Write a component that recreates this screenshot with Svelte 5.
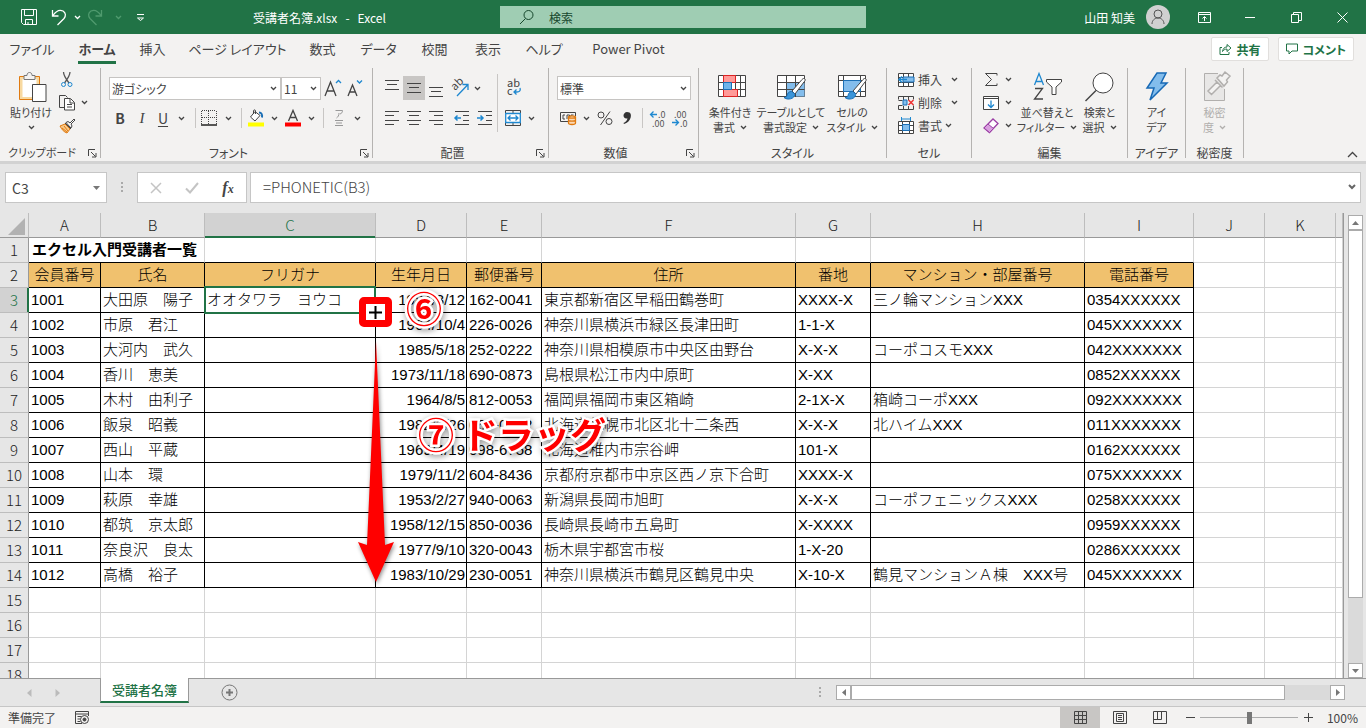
<script lang="ts">
    interface Member {
        id: string
        name: string
        birth: string
        zip: string
        address: string
        block: string
        building: string
        phone: string
    }

    const menuTabs = ['ファイル', 'ホーム', '挿入', 'ページ レイアウト', '数式', 'データ', '校閲', '表示', 'ヘルプ', 'Power Pivot']
    const columns = ['A', 'B', 'C', 'D', 'E', 'F', 'G', 'H', 'I', 'J', 'K', '']
    const headings = ['会員番号', '氏名', 'フリガナ', '生年月日', '郵便番号', '住所', '番地', 'マンション・部屋番号', '電話番号']
    const emptyRows = [15, 16, 17, 18]

    const members: Member[] = [
        { id: '1001', name: '大田原　陽子', birth: '1984/3/12', zip: '162-0041', address: '東京都新宿区早稲田鶴巻町', block: 'XXXX-X', building: '三ノ輪マンションXXX', phone: '0354XXXXXX' },
        { id: '1002', name: '市原　君江', birth: '1964/10/4', zip: '226-0026', address: '神奈川県横浜市緑区長津田町', block: '1-1-X', building: '', phone: '045XXXXXXX' },
        { id: '1003', name: '大河内　武久', birth: '1985/5/18', zip: '252-0222', address: '神奈川県相模原市中央区由野台', block: 'X-X-X', building: 'コーポコスモXXX', phone: '042XXXXXXX' },
        { id: '1004', name: '香川　恵美', birth: '1973/11/18', zip: '690-0873', address: '島根県松江市内中原町', block: 'X-XX', building: '', phone: '0852XXXXXX' },
        { id: '1005', name: '木村　由利子', birth: '1964/8/5', zip: '812-0053', address: '福岡県福岡市東区箱崎', block: '2-1X-X', building: '箱崎コーポXXX', phone: '092XXXXXXX' },
        { id: '1006', name: '飯泉　昭義', birth: '1982/3/26', zip: '060-0812', address: '北海道札幌市北区北十二条西', block: 'X-X-X', building: '北ハイムXXX', phone: '011XXXXXXX' },
        { id: '1007', name: '西山　平蔵', birth: '1969/4/19', zip: '098-6758', address: '北海道稚内市宗谷岬', block: '101-X', building: '', phone: '0162XXXXXX' },
        { id: '1008', name: '山本　環', birth: '1979/11/2', zip: '604-8436', address: '京都府京都市中京区西ノ京下合町', block: 'XXXX-X', building: '', phone: '075XXXXXXX' },
        { id: '1009', name: '萩原　幸雄', birth: '1953/2/27', zip: '940-0063', address: '新潟県長岡市旭町', block: 'X-X-X', building: 'コーポフェニックスXXX', phone: '0258XXXXXX' },
        { id: '1010', name: '都筑　京太郎', birth: '1958/12/15', zip: '850-0036', address: '長崎県長崎市五島町', block: 'X-XXXX', building: '', phone: '0959XXXXXX' },
        { id: '1011', name: '奈良沢　良太', birth: '1977/9/10', zip: '320-0043', address: '栃木県宇都宮市桜', block: '1-X-20', building: '', phone: '0286XXXXXX' },
        { id: '1012', name: '高橋　裕子', birth: '1983/10/29', zip: '230-0051', address: '神奈川県横浜市鶴見区鶴見中央', block: 'X-10-X', building: '鶴見マンションＡ棟　XXX号', phone: '045XXXXXXX' },
    ]

    let activeTab = $state('ホーム')
    let formula = $state('=PHONETIC(B3)')
    let cellName = $state('C3')
    let zoom = $state(100)
</script>

{#snippet chevron()}
    <svg class="chevron" width="7" height="5" viewBox="0 0 7 5"><path d="M1 1l2.5 2.5L6 1" /></svg>
{/snippet}

{#snippet launcher()}
    <svg class="launcher" width="9" height="9" viewBox="0 0 9 9"><path d="M.5 7V.5H7M3 3l4.500 4.500M8 4v4H4" /></svg>
{/snippet}

{#snippet brush()}
    <path d="M30 7c-1-1-2-.5-3 .5L17 19l3 3L29 10c1-1 1.500-2 1-3z" fill="#fff" stroke="#444" />
    <path d="M16.500 19.500c-3 0-4 2-4.500 4-.5 1.500-1.500 2-3 2 2 2 6 2 8.500.5 2-1.500 2.500-3 2-4.500z" fill="#3b95d9" stroke="#1b6fb5" />
{/snippet}

<div class="book">
    <header class="titlebar">
        <div class="quick">
            <button aria-label="上書き保存">
                <svg width="18" height="18" viewBox="0 0 18 18"><path d="M1.500 1.500h15v15h-13l-2-2zM4.500 1.500v6h9v-6M5.500 16.500v-5h7v5M8 14v2" /></svg>
            </button>
            <button aria-label="元に戻す">
                <svg width="16" height="18" viewBox="0 0 16 18"><path d="M1.500 2v6h6M2 7.500C5 3 9 1.500 12 3c3 2 3 5 1 7.500L6.500 17" stroke-width="1.300" /></svg>
            </button>
            <button aria-label="元に戻す一覧">{@render chevron()}</button>
            <button class="dim" aria-label="やり直し">
                <svg width="16" height="18" viewBox="0 0 16 18"><path d="M14.500 2v6h-6M14 7.500C11 3 7 1.500 4 3 1 5 1 8 3 10.500L9.500 17" stroke-width="1.300" /></svg>
            </button>
            <button class="dim" aria-label="やり直し一覧">{@render chevron()}</button>
            <button aria-label="クイック アクセスの設定">
                <svg width="9" height="9" viewBox="0 0 9 9"><path d="M1 1.500h7M1.500 5l3 2.500 3-2.500z" /></svg>
            </button>
        </div>
        <h1>受講者名簿.xlsx&nbsp;&nbsp; -&nbsp;&nbsp; Excel</h1>
        <label class="search">
            <svg width="16" height="16" viewBox="0 0 16 16"><circle cx="9.500" cy="6" r="4.500" /><path d="M6.500 9.500L1 15" /></svg>
            <input type="text" placeholder="検索" aria-label="検索" />
        </label>
        <div class="account">
            <span>山田 知美</span>
            <svg class="avatar" width="24" height="24" viewBox="0 0 24 24"><circle class="disc" cx="12" cy="12" r="12" /><circle cx="12" cy="9" r="4" /><path d="M6 19c0-3.500 2.500-6 6-6s6 2.500 6 6" /></svg>
        </div>
        <div class="window-buttons">
            <button aria-label="リボンの表示オプション">
                <svg width="13" height="11" viewBox="0 0 13 11"><path d="M.5.5h12v10H.5zM.5 2.500h12M6.500 9V5M4.500 6.500l2-2 2 2" /></svg>
            </button>
            <button aria-label="最小化"><svg width="10" height="11" viewBox="0 0 10 11"><path d="M0 5.500h10" /></svg></button>
            <button aria-label="元に戻す (縮小)">
                <svg width="11" height="11" viewBox="0 0 11 11"><path d="M.5 2.500h7v8h-7zM2.500 2.500v-2h8v8h-3" /></svg>
            </button>
            <button aria-label="閉じる"><svg width="11" height="11" viewBox="0 0 11 11"><path d="M.5.5l10 10M10.500.5l-10 10" /></svg></button>
        </div>
    </header>

    <nav class="menu">
        <div class="menu-tabs">
            {#each menuTabs as tab}
                <button class:active={tab === activeTab} onclick={() => (activeTab = tab)}><span>{tab}</span></button>
            {/each}
        </div>
        <button class="pill">
            <svg width="13" height="12" viewBox="0 0 13 12"><path d="M3 4.500H1v7h9V9M3.500 8.500C4 5.500 5.500 4 8 4V1.500L12 5 8 8.500V6C6 6 4.500 7 3.500 8.500z" /></svg>
            共有
        </button>
        <button class="pill">
            <svg width="12" height="12" viewBox="0 0 12 12"><path d="M.5 1h11v7H6L3 11V8H.5z" /></svg>
            コメント
        </button>
    </nav>

    <section class="ribbon">
        <div class="group clipboard">
            <div class="group-body">
                <button class="big">
                    <svg width="28" height="32" viewBox="0 0 28 32">
                        <path d="M4 5.500h17v21H4z" fill="#fff" stroke="#f8d9a0" stroke-width="3" />
                        <path d="M2.500 4.500h20v23h-20z" stroke="#e07a10" />
                        <path d="M7 7.500V3.500h3c0-2 1-3 2.500-3s2.500 1 2.500 3h3v4z" fill="#f3f2f1" stroke="#777" />
                        <path d="M15.500 12.500H29v17H15.500z" fill="#fff" stroke="#444" />
                    </svg>
                    <span>貼り付け</span>
                    <span>{@render chevron()}</span>
                </button>
                <div class="small-stack">
                    <button aria-label="切り取り">
                        <svg width="16" height="17" viewBox="0 0 16 17"><path d="M4.500 1c0 3 1 5 5.500 11M11 1c0 3-1 5-5.500 11" stroke="#555" stroke-width="1.300" /><circle cx="4.500" cy="13.500" r="2" stroke="#1e88d0" /><circle cx="11" cy="13.500" r="2" stroke="#1e88d0" /></svg>
                    </button>
                    <span></span>
                    <button aria-label="コピー">
                        <svg width="16" height="17" viewBox="0 0 16 17"><path d="M5 13.500H.5v-12h6l2 2" fill="none" /><path d="M5.500 4.500h6l4 4v7.500h-10z" fill="#fff" /><path d="M11 5v4h4M8 10.500h5M8 13h5" /></svg>
                    </button>
                    <button aria-label="コピーの一覧">{@render chevron()}</button>
                    <button aria-label="書式のコピー/貼り付け">
                        <svg width="17" height="16" viewBox="0 0 17 16"><path d="M1 8l5-2 5 5-3 4c-3-1-5-3-7-7z" fill="#f8c98a" stroke="#e07a10" /><path d="M3 10l5 4M5 8l4 5" stroke="#e07a10" /><path d="M6 5l6 6M7 4.500l2-1 2 1.500L15 1l1 1-4 4 1 2-1 2z" fill="#fff" /></svg>
                    </button>
                </div>
            </div>
            <div class="group-label">クリップボード{@render launcher()}</div>
        </div>

        <div class="group font">
            <div class="group-body rows">
                <div class="font-top">
                    <label class="combo"><select aria-label="フォント"><option>游ゴシック</option></select>{@render chevron()}</label>
                    <label class="combo"><select aria-label="フォント サイズ"><option>11</option></select>{@render chevron()}</label>
                    <button aria-label="フォント サイズの拡大">
                        <svg width="17" height="18" viewBox="0 0 17 18"><path d="M1 17L6.500 3 12 17M3 12h7" stroke-width="1.300" /><path d="M12 4l2.500-2.500L17 4" stroke="#1e88d0" stroke-width="1.300" /></svg>
                    </button>
                    <button aria-label="フォント サイズの縮小">
                        <svg width="17" height="18" viewBox="0 0 17 18"><path d="M2 17L6.500 6 11 17M3.500 13h6" stroke-width="1.300" /><path d="M11 1.500L13.500 4 16 1.500" stroke="#1e88d0" stroke-width="1.300" /></svg>
                    </button>
                </div>
                <div class="font-bottom">
                    <button class="letter bold">B</button>
                    <button class="letter italic">I</button>
                    <button class="letter underline">U</button>
                    <button aria-label="下線の種類">{@render chevron()}</button>
                    <i class="rule"></i>
                    <button aria-label="罫線">
                        <svg width="16" height="16" viewBox="0 0 16 16"><path d="M1 .5h14M.5 1v13M15.500 1v13M7.500 1v13M1 7.500h14" stroke-dasharray="1 1" /><path d="M0 15h16" stroke="#000" stroke-width="1.300" /></svg>
                    </button>
                    <button aria-label="罫線の種類">{@render chevron()}</button>
                    <i class="rule"></i>
                    <button aria-label="塗りつぶしの色">
                        <svg width="16" height="18" viewBox="0 0 16 18"><path d="M7 2.500L2.500 8 7 12l5-5.500zM5.500 5V2c0-1.500 2-1.500 2 0v3" fill="#fff" /><path d="M11 3.500c2.500 0 3.500 2 3 5" stroke="#1b6fb5" stroke-width="2" /><path d="M0 15.500h16" stroke="#ff0" stroke-width="4" /></svg>
                    </button>
                    <button aria-label="塗りつぶしの色一覧">{@render chevron()}</button>
                    <button aria-label="フォントの色">
                        <svg width="16" height="18" viewBox="0 0 16 18"><path d="M3.500 12L8 1.500 12.500 12M5 8.500h6" stroke-width="1.300" /><path d="M0 15.500h16" stroke="red" stroke-width="4" /></svg>
                    </button>
                    <button aria-label="フォントの色一覧">{@render chevron()}</button>
                    <i class="rule"></i>
                    <button class="dim" aria-label="ふりがなの表示">
                        <svg width="12" height="18" viewBox="0 0 12 18"><path d="M2.500 1.500h7c0 2-1 3-2.500 3.500M6 4c0 2.500-1 4-2.500 5M2 11.500h8M3 14h6M2 16.500h8" /></svg>
                    </button>
                    <button aria-label="ふりがなの設定">{@render chevron()}</button>
                </div>
            </div>
            <div class="group-label">フォント{@render launcher()}</div>
        </div>

        <div class="group align">
            <div class="group-body">
                <div class="rows">
                    <div class="align-top">
                        <button aria-label="上揃え"><svg width="14" height="20" viewBox="0 0 14 20"><path d="M0 2.500h14M2 6.500h10M0 11.500h14" /></svg></button>
                        <button class="pressed" aria-label="上下中央揃え"><svg width="14" height="14" viewBox="0 0 14 14"><path d="M0 2.500h14M2 6.500h10M0 11.500h14" /></svg></button>
                        <button aria-label="下揃え"><svg width="14" height="20" viewBox="0 0 14 20"><path d="M0 9.500h14M2 13.500h10M0 18.500h14" /></svg></button>
                        <button aria-label="方向">
                            <svg width="18" height="18" viewBox="0 0 18 18"><text transform="translate(5 12) rotate(-45)" class="glyph">ab</text><path d="M7 17L17.500 6M12.500 5.500H18V11" stroke="#1e88d0" stroke-width="1.300" /></svg>
                        </button>
                        <button aria-label="方向の一覧">{@render chevron()}</button>
                    </div>
                    <div class="align-bottom">
                        <button aria-label="左揃え"><svg width="14" height="14" viewBox="0 0 14 14"><path d="M0 .5h14M0 4.500h9M0 9.500h14M0 13.500h9" /></svg></button>
                        <button aria-label="中央揃え"><svg width="14" height="14" viewBox="0 0 14 14"><path d="M0 .5h14M2 4.500h10M0 9.500h14M2 13.500h10" /></svg></button>
                        <button aria-label="右揃え"><svg width="14" height="14" viewBox="0 0 14 14"><path d="M0 .5h14M5 4.500h9M0 9.500h14M5 13.500h9" /></svg></button>
                        <button aria-label="インデントを減らす"><svg width="15" height="14" viewBox="0 0 15 14"><path d="M1 .5h14M9 4.500h6M9 9.500h6M1 13.500h14" /><path d="M7 7H1M3.500 4.500L1 7l2.500 2.500" stroke="#1e88d0" stroke-width="1.500" /></svg></button>
                        <button aria-label="インデントを増やす"><svg width="15" height="14" viewBox="0 0 15 14"><path d="M1 .5h14M9 4.500h6M9 9.500h6M1 13.500h14" /><path d="M0 7h6M3.500 4.500L6 7 3.500 9.500" stroke="#1e88d0" stroke-width="1.500" /></svg></button>
                    </div>
                </div>
                <i class="rule tall"></i>
                <div class="rows">
                    <div class="merge">
                        <button aria-label="折り返して全体を表示する">
                            <svg width="16" height="18" viewBox="0 0 16 18"><text x="2" y="8" class="glyph">ab</text><text x="2" y="16" class="glyph">c</text><path d="M15 9c1 3-1 4-3 4H9M11.500 10.500L9 13l2.500 2.500" stroke="#1e88d0" stroke-width="1.300" /></svg>
                        </button>
                    </div>
                    <div class="merge">
                        <button aria-label="セルを結合して中央揃え">
                            <svg width="16" height="16" viewBox="0 0 16 16"><path d="M.5 3V.5h15V3M.5 12.500v3h15v-3M8 0v3M8 12.500V16" /><path d="M.7 3.500h14.600v9H.7z" fill="#fff" stroke="#1e88d0" stroke-width="1.300" /><path d="M3 8h10M5.500 5.500L3 8l2.500 2.500M10.500 5.500L13 8l-2.500 2.500" stroke="#1e88d0" stroke-width="1.300" /></svg>
                        </button>
                        <button aria-label="結合の種類">{@render chevron()}</button>
                    </div>
                </div>
            </div>
            <div class="group-label">配置{@render launcher()}</div>
        </div>

        <div class="group number">
            <div class="group-body rows">
                <label class="combo"><select aria-label="表示形式"><option>標準</option></select>{@render chevron()}</label>
                <div class="number-bottom">
                    <button aria-label="通貨表示形式">
                        <svg width="17" height="14" viewBox="0 0 17 14"><path d="M8 10.500H.5v-9h15V5M5 4H3v4h2M7 8V4h2.500v2M11 6V4h2.500" /><path d="M8.500 6v6c0 2 7 2 7 0V6c0-1.500-7-1.500-7 0c0 1.500 7 1.500 7 0M8.500 9c0 1.500 7 1.500 7 0" fill="#fbd9b5" stroke="#e07a10" stroke-width="1.300" /></svg>
                    </button>
                    <button aria-label="通貨の一覧">{@render chevron()}</button>
                    <button aria-label="パーセント スタイル">
                        <svg width="16" height="16" viewBox="0 0 16 16"><circle cx="4" cy="5" r="3" /><circle cx="12" cy="11.500" r="3" /><path d="M13 1.500L3.500 15" /></svg>
                    </button>
                    <button aria-label="桁区切りスタイル">
                        <svg width="10" height="14" viewBox="0 0 10 14"><path d="M5 1c4 0 4.500 3 3.500 6-1 3-3 5-6.500 6l-.5-1c2-1 3.500-2.500 4-4.500-3 .5-4-1.500-4-3S3 1 5 1z" fill="#333" stroke="none" /></svg>
                    </button>
                    <i class="rule"></i>
                    <button aria-label="小数点以下の表示桁数を増やす">
                        <svg width="17" height="17" viewBox="0 0 17 17"><text x="9" y="8" class="digits">.0</text><text x="3" y="17" class="digits">.00</text><path d="M8 4.500H1.500M4.500 1.500l-3 3 3 3" stroke="#1e88d0" stroke-width="1.300" /></svg>
                    </button>
                    <button aria-label="小数点以下の表示桁数を減らす">
                        <svg width="17" height="17" viewBox="0 0 17 17"><text x="3" y="8" class="digits">.00</text><text x="9" y="17" class="digits">.0</text><path d="M1 12.500h6.500M4.500 9.500l3 3-3 3" stroke="#1e88d0" stroke-width="1.300" /></svg>
                    </button>
                </div>
            </div>
            <div class="group-label">数値{@render launcher()}</div>
        </div>

        <div class="group styles">
            <div class="group-body">
                <button class="big">
                    <svg width="32" height="32" viewBox="0 0 32 32"><path d="M4.500 3.500h27v21h-27z" fill="#fff" /><path d="M4.500 10.500h27M4.500 17.500h27M9.500 3v22M21.500 3v22M26.500 3v22" /><path d="M9.500 3.500h12v7h-12zM9.500 17.500h14v7h-14z" fill="#ff9a98" stroke="#d22" /><path d="M9.500 10.500h8v7h-8z" fill="#6fb4ea" stroke="#1b6fb5" /></svg>
                    <span>条件付き</span>
                    <span>書式 {@render chevron()}</span>
                </button>
                <button class="big">
                    <svg width="32" height="32" viewBox="0 0 32 32"><path d="M2.500 3.500h27v21h-27z" fill="#fff" /><path d="M11.500 10.500h18v14h-18z" fill="#83bdec" stroke="none" /><path d="M2.500 10.500h27M2.500 17.500h27M11.500 3v22M20.500 3v22" />{@render brush()}</svg>
                    <span>テーブルとして</span>
                    <span>書式設定 {@render chevron()}</span>
                </button>
                <button class="big">
                    <svg width="32" height="32" viewBox="0 0 32 32"><path d="M2.500 3.500h27v21h-27z" fill="#fff" /><path d="M2.500 8.500h27M2.500 19.500h27M7.500 3v22M24.500 3v22" /><path d="M7.500 8.500h17v11h-17z" fill="#83bdec" stroke="#1b6fb5" />{@render brush()}</svg>
                    <span>セルの</span>
                    <span>スタイル {@render chevron()}</span>
                </button>
            </div>
            <div class="group-label">スタイル</div>
        </div>

        <div class="group cells">
            <div class="group-body lines">
                <button>
                    <svg width="17" height="14" viewBox="0 0 17 14"><path d="M.5.5h15v13H.5zM.5 4.500h15M.5 9.500h15M5.500 0v14M10.500 0v14" fill="#fff" /><path d="M5 4h11v5H5z" fill="#83bdec" stroke="#1b6fb5" /><path d="M9 6.500H1M4 3.500l-3 3 3 3" stroke="#1e88d0" stroke-width="1.500" /></svg>
                    <span>挿入</span>{@render chevron()}
                </button>
                <button>
                    <svg width="17" height="14" viewBox="0 0 17 14"><path d="M.5 3.500v-3h15v3M.5 9.500v4h15v-4M.5 4.500h4M.5 9.500h4M5.500 0v4M10.500 0v4M5.500 10v4M10.500 10v4" /><path d="M5 4h4v5H5z" fill="#83bdec" stroke="#1b6fb5" /><path d="M10.500 4l5 5M15.500 4l-5 5" stroke="#e33" stroke-width="1.500" /></svg>
                    <span>削除</span>{@render chevron()}
                </button>
                <button>
                    <svg width="17" height="17" viewBox="0 0 17 17"><path d="M.5 4.500h15v12H.5zM.5 8.500h15M.5 13.500h15M4.500 4v13M11.500 4v13" fill="#fff" /><path d="M4.500 7.500h7v6h-7z" fill="#83bdec" stroke="#1b6fb5" /><path d="M3.500 0v4M12.500 0v4M4 2h8" stroke="#1e88d0" /></svg>
                    <span class="short">書式</span>{@render chevron()}
                </button>
            </div>
            <div class="group-label">セル</div>
        </div>

        <div class="group edit">
            <div class="group-body">
                <div class="small-stack">
                    <button aria-label="合計"><svg width="14" height="15" viewBox="0 0 14 15"><path d="M13 3.500v-2H1.500l6 6-6 6H13v-2" /></svg></button>
                    <button aria-label="合計の一覧">{@render chevron()}</button>
                    <button aria-label="フィル"><svg width="16" height="14" viewBox="0 0 16 14"><path d="M.5.5h15v13H.5zM.5 2.500h15" fill="#fff" /><path d="M8 4.500v7M5 8.500l3 3 3-3" stroke="#1e88d0" stroke-width="1.300" /></svg></button>
                    <button aria-label="フィルの一覧">{@render chevron()}</button>
                    <button aria-label="クリア"><svg width="16" height="16" viewBox="0 0 16 16"><path d="M1 10L10 1l5 4.500-8.500 9z" fill="#fff" stroke="#9b3fa5" stroke-width="1.300" /><path d="M1 10l4-4 5.500 4.500-4 4z" fill="#d9a0df" stroke="#9b3fa5" /></svg></button>
                    <button aria-label="クリアの一覧">{@render chevron()}</button>
                </div>
                <button class="big">
                    <svg width="30" height="32" viewBox="0 0 30 32"><path d="M2.500 13L7 1.500 11.500 13M4 9.500h6" stroke="#1e88d0" stroke-width="1.300" /><path d="M3 16.500h7.500L2.500 27H11" stroke-width="1.300" /><path d="M14.500 7.500h15V10l-5.500 5v7.500h-4V15l-5.500-5z" fill="#fff" /></svg>
                    <span>並べ替えと</span>
                    <span>フィルター {@render chevron()}</span>
                </button>
                <button class="big">
                    <svg width="32" height="32" viewBox="0 0 32 32"><circle cx="19" cy="11" r="10" fill="#fff" /><path d="M12 18.500L1.500 29" stroke-width="1.500" /></svg>
                    <span>検索と</span>
                    <span>選択 {@render chevron()}</span>
                </button>
            </div>
            <div class="group-label">編集</div>
        </div>

        <div class="group single">
            <div class="group-body">
                <button class="big">
                    <svg width="24" height="32" viewBox="0 0 24 32"><path d="M12 1h9l-5 10h6L5 28l4-12H2z" fill="#83bdec" stroke="#1769b5" stroke-width="1.500" /></svg>
                    <span>アイ</span>
                    <span>デア</span>
                </button>
            </div>
            <div class="group-label">アイデア</div>
        </div>

        <div class="group single">
            <div class="group-body">
                <button class="big" disabled>
                    <svg width="28" height="32" viewBox="0 0 28 32"><path d="M17 1.500H3.500v27h20V17" fill="#e8e7e6" /><path d="M7 19l9-9 3.500 3.500-9 9zM14 8l7.500 7.500M16 6l3-3 2 1 3-4 5 4-3.500 4 1 2-3.500 4z" fill="#f3f2f1" stroke-width="1.500" /></svg>
                    <span>秘密</span>
                    <span>度 {@render chevron()}</span>
                </button>
            </div>
            <div class="group-label">秘密度</div>
        </div>
        <button class="collapse" aria-label="リボンを折りたたむ">
            <svg width="11" height="7" viewBox="0 0 11 7"><path d="M1 6l4.500-4.500L10 6" stroke-width="1.300" /></svg>
        </button>
    </section>

    <section class="formula-bar">
        <label class="name-box">
            <input type="text" bind:value={cellName} aria-label="名前ボックス" />
            <svg width="7" height="4" viewBox="0 0 7 4"><path d="M0 0h7L3.500 4z" /></svg>
        </label>
        <i class="dots"></i>
        <div class="fx">
            <button aria-label="キャンセル"><svg width="12" height="12" viewBox="0 0 12 12"><path d="M1 1l10 10M11 1L1 11" /></svg></button>
            <button aria-label="入力"><svg width="14" height="12" viewBox="0 0 14 12"><path d="M1 6.500L5 10.500 13 1" stroke-width="2" /></svg></button>
            <button class="fx-label" aria-label="関数の挿入">f<small>x</small></button>
        </div>
        <label class="formula">
            <input type="text" bind:value={formula} aria-label="数式バー" />
            <svg width="8" height="6" viewBox="0 0 8 6"><path d="M1 1l3 3 3-3" stroke="#666" stroke-width="2" /></svg>
        </label>
    </section>

    <main class="sheet">
        <div class="grid">
            <table>
                <colgroup>
                    <col class="w-head" /><col class="w-a" /><col class="w-b" /><col class="w-c" /><col class="w-d" /><col class="w-e" />
                    <col class="w-f" /><col class="w-e" /><col class="w-h" /><col class="w-i" /><col class="w-j" /><col class="w-j" /><col />
                </colgroup>
                <thead>
                    <tr>
                        <th class="corner"><svg width="17" height="17" viewBox="0 0 17 17"><path d="M17 0v17H0z" /></svg></th>
                        {#each columns as column}
                            <th class:current={column === 'C'}>{column}</th>
                        {/each}
                    </tr>
                </thead>
                <tbody>
                    <tr class="title-row">
                        <th>1</th>
                        <td colspan="2" class="ruled">エクセル入門受講者一覧</td>
                        {#each columns.slice(2) as _, i}
                            <td class:ruled={i < 7}></td>
                        {/each}
                    </tr>
                    <tr class="heading-row">
                        <th>2</th>
                        {#each headings as heading}
                            <td class="boxed">{heading}</td>
                        {/each}
                        <td></td><td></td><td></td>
                    </tr>
                    {#each members as member, i}
                        <tr>
                            <th class:current={i === 0}>{i + 3}</th>
                            <td class="boxed">{member.id}</td>
                            <td class="boxed">{member.name}</td>
                            <td class="boxed" class:selected={i === 0}>{i === 0 ? 'オオタワラ　ヨウコ' : ''}</td>
                            <td class="boxed date">{member.birth}</td>
                            <td class="boxed">{member.zip}</td>
                            <td class="boxed">{member.address}</td>
                            <td class="boxed">{member.block}</td>
                            <td class="boxed">{member.building}</td>
                            <td class="boxed">{member.phone}</td>
                            <td></td><td></td><td></td>
                        </tr>
                    {/each}
                    {#each emptyRows as row}
                        <tr>
                            <th>{row}</th>
                            {#each columns as _}
                                <td></td>
                            {/each}
                        </tr>
                    {/each}
                </tbody>
            </table>

            <!-- drag guide from the fill handle down to the last member -->
            <svg class="arrow" width="44" height="250" viewBox="0 0 44 250"><path d="M22 4l9 204 9-3-18 40L4 205l9 3z" /></svg>
            <div class="handle">
                <svg width="13" height="13" viewBox="0 0 13 13"><path d="M6.500 0v13M0 6.500h13" /></svg>
            </div>
            <div class="note step-six">⑥</div>
            <div class="note step-seven"><span>⑦</span>ドラッグ</div>
        </div>
        <div class="scroll-y">
            <button aria-label="上へスクロール"><svg width="7" height="4" viewBox="0 0 7 4"><path d="M0 4h7L3.500 0z" /></svg></button>
            <i class="thumb"></i>
            <i class="track"></i>
            <button aria-label="下へスクロール"><svg width="7" height="4" viewBox="0 0 7 4"><path d="M0 0h7L3.500 4z" /></svg></button>
        </div>
    </main>

    <div class="sheet-tabs">
        <div class="sheet-nav">
            <button aria-label="前のシート"><svg width="5" height="8" viewBox="0 0 5 8"><path d="M4.500 0v8L0 4z" /></svg></button>
            <button aria-label="次のシート"><svg width="5" height="8" viewBox="0 0 5 8"><path d="M.5 0v8L5 4z" /></svg></button>
        </div>
        <button class="sheet-tab">受講者名簿</button>
        <button class="add" aria-label="新しいシート">
            <svg width="17" height="17" viewBox="0 0 17 17"><circle cx="8.500" cy="8.500" r="7.500" /><path d="M8.500 5v7M5 8.500h7" stroke-width="2" /></svg>
        </button>
        <i class="dots"></i>
        <div class="scroll-x">
            <button aria-label="左へスクロール"><svg width="4" height="7" viewBox="0 0 4 7"><path d="M4 0v7L0 3.500z" /></svg></button>
            <i class="thumb"></i>
            <i class="track"></i>
            <button aria-label="右へスクロール"><svg width="4" height="7" viewBox="0 0 4 7"><path d="M0 0v7l4-3.500z" /></svg></button>
        </div>
    </div>

    <footer class="status">
        <span>準備完了</span>
        <button class="macro" aria-label="マクロの記録">
            <svg width="15" height="14" viewBox="0 0 15 14"><path d="M7 12.500H.5V.5h13V5M.5 3h13M2.500 5.500h4M2.500 8h3M2.500 10.500h3" /><circle cx="9.500" cy="8.500" r="4" fill="#f3f2f1" /><circle cx="9.500" cy="8.500" r="1.500" fill="#444" /></svg>
        </button>
        <div class="views">
            <button class="pressed" aria-label="標準"><svg width="13" height="13" viewBox="0 0 13 13"><path d="M.5.5h12v12H.5zM4.500 0v13M8.500 0v13M0 4.500h13M0 8.500h13" /></svg></button>
            <button aria-label="ページ レイアウト"><svg width="14" height="13" viewBox="0 0 14 13"><path d="M.5.5h13v12H.5zM3.500 2.500h7v8h-7zM5 4.500h4M5 6.500h4M5 8.500h4" /></svg></button>
            <button aria-label="改ページ プレビュー"><svg width="14" height="13" viewBox="0 0 14 13"><path d="M.5.5h13v12H.5zM4.500.5v8M8.500.5v8M.5 8.500h8" /></svg></button>
        </div>
        <button class="step" aria-label="縮小"><svg width="9" height="9" viewBox="0 0 9 9"><path d="M0 4.500h9" /></svg></button>
        <input type="range" min="0" max="200" bind:value={zoom} aria-label="ズーム" />
        <button class="step" aria-label="拡大"><svg width="9" height="9" viewBox="0 0 9 9"><path d="M0 4.500h9M4.500 0v9" /></svg></button>
        <output>{zoom}%</output>
    </footer>
</div>

<style>
    :global(body) {
        margin: 0;
        overflow: hidden;
    }

    .book {
        display: flex;
        flex-direction: column;
        height: 100vh;
        overflow: hidden;
        background: #e6e6e6;
        color: #444;
        font-family: 'Noto Sans CJK JP', sans-serif;
        font-size: 12px;
        font-feature-settings: 'palt';
    }

    .book * {
        box-sizing: border-box;
    }

    button {
        display: flex;
        align-items: center;
        justify-content: center;
        padding: 0;
        border: 0;
        background: none;
        color: inherit;
        font: inherit;
        font-feature-settings: inherit;
        white-space: nowrap;
    }

    input,
    select {
        min-width: 0;
        padding: 0;
        border: 0;
        outline: 0;
        background: none;
        color: inherit;
        font: inherit;
        font-feature-settings: inherit;
        appearance: none;
    }

    svg {
        flex: none;
        fill: none;
        stroke: #444;
        overflow: visible;
    }

    .chevron {
        stroke-width: 1.3;
    }

    .glyph {
        fill: #444;
        stroke: none;
        font-size: 11px;
    }

    .digits {
        fill: #555;
        stroke: none;
        font-size: 9px;
    }

    /* title bar */
    .titlebar {
        display: flex;
        flex: none;
        align-items: center;
        height: 34px;
        padding-right: 1px;
        background: #217346;
        color: #fff;
    }

    .titlebar svg {
        stroke: #fff;
    }

    .quick {
        display: grid;
        grid-template-columns: 26px 32px 2px 32px 12px 30px;
        gap: 1px;
        width: 237px;
        padding-left: 16px;
    }

    .quick .dim svg {
        stroke: #4f9a6e;
    }

    h1 {
        width: 263px;
        margin: 0;
        padding-left: 16px;
        font-size: 12px;
        font-weight: 400;
    }

    .search {
        display: flex;
        align-items: center;
        gap: 14px;
        width: 366px;
        height: 22px;
        padding-left: 19px;
        background: #9fcdb3;
    }

    .search svg {
        stroke: #17482d;
    }

    .search input {
        flex: 1;
    }

    .search input::placeholder {
        color: #17482d;
        opacity: 1;
    }

    .account {
        display: flex;
        align-items: center;
        gap: 11px;
        margin-left: auto;
    }

    .titlebar .avatar {
        stroke: #555;
    }

    .titlebar .disc {
        fill: #d0d0d0;
        stroke: none;
    }

    .window-buttons {
        display: grid;
        grid-template-columns: repeat(4, 46px);
        margin-left: 11px;
    }

    /* menu */
    .menu {
        display: flex;
        flex: none;
        align-items: center;
        gap: 9px;
        height: 30px;
        padding-right: 12px;
        background: #f3f2f1;
        font-size: 13px;
    }

    .menu-tabs {
        display: grid;
        flex: 1;
        grid-template-columns: 64px 66px 45px 125px 45px 67px 45px 62px 50px 119px;
    }

    .menu-tabs button {
        height: 30px;
    }

    .menu-tabs span {
        margin-top: 5px;
        padding-bottom: 3px;
        border-bottom: 3px solid transparent;
        line-height: 18px;
    }

    .menu-tabs .active span {
        border-color: #217346;
        font-weight: 700;
    }

    .pill {
        gap: 5px;
        height: 24px;
        padding: 0 7px;
        border: 1px solid #e1dfdd;
        border-radius: 2px;
        background: #fff;
        color: #217346;
        font-size: 12px;
        font-weight: 700;
    }

    .pill svg {
        stroke: #217346;
    }

    /* ribbon */
    .ribbon {
        display: flex;
        flex: none;
        height: 100px;
        padding-top: 4px;
        border-bottom: 3px solid #d2d2d2;
        background: #f3f2f1;
        line-height: 15px;
    }

    .group {
        display: flex;
        flex: none;
        flex-direction: column;
        height: 90px;
        border-right: 1px solid #b5b3b1;
    }

    .group-body {
        display: flex;
        height: 77px;
    }

    .group-label {
        position: relative;
        height: 13px;
        line-height: 15px;
        text-align: center;
    }

    .launcher {
        position: absolute;
        right: 3px;
        bottom: 0;
    }

    .rows {
        display: flex;
        flex-direction: column;
        gap: 6px;
        padding-top: 8px;
    }

    .rows > div {
        display: grid;
        height: 24px;
        place-items: center;
    }

    .big {
        flex-direction: column;
        justify-content: flex-start;
        padding-top: 4px;
        font-size: 11px;
    }

    .big > svg {
        margin-bottom: 1px;
    }

    .big span {
        display: flex;
        align-items: center;
        gap: 5px;
        height: 15px;
    }

    .big:disabled {
        color: #b1afad;
    }

    .big:disabled svg {
        stroke: #b1afad;
    }

    .small-stack {
        display: grid;
        grid-template-rows: repeat(3, 23px);
        place-items: center;
        align-content: start;
    }

    .rule {
        width: 1px;
        height: 20px;
        background: #c8c6c4;
    }

    .rule.tall {
        height: 58px;
        margin: 6px 0 0 4px;
    }

    .combo {
        display: flex;
        align-items: center;
        width: 100%;
        height: 23px;
        padding: 0 3px 0 2px;
        border: 1px solid #c6c4c2;
        background: #fff;
    }

    .combo select {
        flex: 1;
    }

    .clipboard {
        width: 101px;
    }

    .clipboard .group-body {
        padding-left: 6px;
    }

    .clipboard .group-label {
        padding-right: 16px;
        font-size: 11px;
    }

    .clipboard .big {
        width: 50px;
    }

    .clipboard .small-stack {
        grid-template-columns: 22px 12px;
    }

    .font {
        width: 272px;
    }

    .font .group-label,
    .number .group-label,
    .align .group-label {
        padding-right: 16px;
    }

    .font .rows,
    .number .rows {
        padding-left: 8px;
    }

    .font-top {
        grid-template-columns: 172px 40px 22px 22px;
    }

    .font-bottom {
        grid-template-columns: 22px 22px 20px 16px 12px 16px 22px 4px 26px 10px 28px 8px 16px 16px 20px;
    }

    .font-bottom .dim svg {
        stroke: #999;
    }

    .letter {
        font-size: 14px;
    }

    .bold {
        font-weight: 700;
    }

    .italic {
        font-family: 'Liberation Serif', serif;
        font-size: 15px;
        font-style: italic;
    }

    .underline {
        text-decoration: underline;
        text-underline-offset: 2px;
    }

    .align {
        width: 176px;
    }

    .align .group-body {
        padding-left: 8px;
    }

    .align-top {
        grid-template-columns: 22px 22px 22px 24px 12px;
    }

    .align-bottom {
        grid-template-columns: 22px 22px 22px 28px 18px;
    }

    .merge {
        grid-template-columns: 30px 7px;
    }

    .align .pressed {
        width: 22px;
        height: 24px;
    }

    .pressed {
        background: #c8c6c4;
    }

    .number {
        width: 150px;
    }

    .number .rows {
        padding-right: 7px;
    }

    .number-bottom {
        grid-template-columns: 22px 14px 24px 20px 10px 20px 24px;
    }

    .number .combo {
        height: 24px;
    }

    .styles {
        width: 188px;
    }

    .styles .group-body {
        display: grid;
        grid-template-columns: 62px 60px 62px;
    }

    .cells {
        width: 85px;
    }

    .lines {
        flex-direction: column;
        padding-left: 11px;
    }

    .lines button {
        justify-content: flex-start;
        height: 23px;
    }

    .lines span {
        width: 36px;
        padding-left: 3px;
        text-align: left;
    }

    .lines .short {
        width: 30px;
    }

    .edit {
        width: 156px;
    }

    .edit .group-body {
        display: grid;
        grid-template-columns: 40px 54px 51px;
        padding-left: 8px;
    }

    .edit .small-stack {
        grid-template-columns: 22px 12px;
        justify-content: start;
    }

    .single {
        width: 58px;
    }

    .single .big {
        flex: 1;
    }

    .collapse {
        align-self: flex-end;
        margin: 0 8px 3px auto;
    }

    /* formula bar */
    .formula-bar {
        display: flex;
        flex: none;
        height: 49px;
        padding: 8px 5px 10px;
        font-size: 14px;
    }

    .name-box,
    .fx,
    .formula {
        display: flex;
        align-items: center;
        border: 1px solid #c6c6c6;
        background: #fff;
    }

    .name-box {
        width: 102px;
        padding: 0 6px;
    }

    .name-box input,
    .formula input {
        flex: 1;
    }

    .name-box svg,
    .sheet-nav svg,
    .scroll-y svg,
    .scroll-x svg {
        fill: #777;
        stroke: none;
    }

    .dots {
        width: 2px;
        height: 11px;
        background: repeating-linear-gradient(#aaa 0 2px, transparent 2px 4px);
    }

    .formula-bar .dots {
        margin: 10px 14px 0;
    }

    .fx {
        display: grid;
        grid-template-columns: repeat(3, 36px);
        width: 110px;
        margin-right: 3px;
    }

    .fx svg {
        stroke: #c4c4c4;
        stroke-width: 1.5;
    }

    .fx-label {
        font-family: 'Liberation Serif', serif;
        font-size: 16px;
        font-style: italic;
        font-weight: 700;
    }

    .fx-label small {
        padding-top: 3px;
        font-size: 12px;
    }

    .formula {
        flex: 1;
        padding: 0 4px 2px 12px;
        font-size: 15px;
        font-weight: 300;
    }

    /* worksheet */
    .sheet {
        display: flex;
        flex: 1;
        min-height: 0;
        padding-right: 3px;
        border-bottom: 1px solid #999;
    }

    .grid {
        position: relative;
        flex: 1;
        min-width: 0;
        overflow: hidden;
        border-right: 1px solid #999;
        font-feature-settings: normal;
    }

    table {
        width: 100%;
        table-layout: fixed;
        border-spacing: 0;
        color: #000;
        font-family: 'Liberation Sans', 'Noto Sans CJK JP', sans-serif;
        font-size: 15px;
        font-weight: 300;
        line-height: 24px;
    }

    .w-head {
        width: 29px;
    }

    .w-a {
        width: 72px;
    }

    .w-b {
        width: 104px;
    }

    .w-c {
        width: 171px;
    }

    .w-d {
        width: 91px;
    }

    .w-e {
        width: 75px;
    }

    .w-f {
        width: 254px;
    }

    .w-h {
        width: 214px;
    }

    .w-i {
        width: 109px;
    }

    .w-j {
        width: 71px;
    }

    th {
        height: 25px;
        padding: 0;
        border-right: 1px solid #999;
        border-bottom: 1px solid #bdbdbd;
        background: #e6e6e6;
        color: #222;
        font-family: 'Noto Sans CJK JP', sans-serif;
        font-weight: 300;
        line-height: 22px;
    }

    thead th {
        border-right-color: #bdbdbd;
        border-bottom-color: #999;
    }

    th.current {
        background: #d2d2d2;
        color: #217346;
    }

    thead th.current {
        border-bottom-color: #217346;
        box-shadow: inset 0 -1px #217346;
    }

    tbody th.current {
        border-right-color: #217346;
        box-shadow: inset -1px 0 #217346;
    }

    .corner svg {
        display: block;
        margin: 2px 0 0 8px;
        fill: #b2b2b2;
        stroke: none;
    }

    td {
        height: 25px;
        padding: 0 2px;
        border-right: 1px solid #d4d4d4;
        border-bottom: 1px solid #d4d4d4;
        background: #fff;
        white-space: nowrap;
    }

    .ruled {
        border-bottom-color: #000;
    }

    .boxed {
        border-color: #000;
    }

    .title-row td {
        padding-left: 3px;
        font-weight: 700;
    }

    .heading-row .boxed {
        background: #f0c16e;
        text-align: center;
    }

    .date {
        padding-right: 1px;
        text-align: right;
    }

    .selected {
        position: relative;
    }

    .selected::after {
        position: absolute;
        inset: -2px -1px -2px -1px;
        border: 2px solid #217346;
        content: '';
    }

    /* the marks below float over the cells */
    .arrow {
        position: absolute;
        top: 124px;
        left: 354px;
        fill: red;
        stroke: none;
        filter: drop-shadow(1px 2px 2px rgba(0, 0, 0, 0.45));
    }

    .handle {
        position: absolute;
        top: 84px;
        left: 359px;
        display: grid;
        place-items: center;
        width: 33px;
        height: 30px;
        border: 7px solid red;
        border-radius: 5px;
        background: #fff;
    }

    .handle svg {
        stroke: #000;
        stroke-width: 2;
    }

    .note {
        position: absolute;
        display: flex;
        align-items: center;
        height: 40px;
        color: red;
        font-size: 36px;
        font-weight: 700;
        line-height: 40px;
        paint-order: stroke fill;
        -webkit-text-stroke: 5px #fff;
        filter: drop-shadow(1px 2px 3px rgba(0, 0, 0, 0.4));
    }

    .step-six {
        top: 74px;
        left: 406px;
    }

    .step-seven {
        top: 200px;
        left: 418px;
        gap: 8px;
    }

    .scroll-y,
    .scroll-x {
        display: flex;
    }

    .scroll-y {
        flex-direction: column;
        width: 15px;
        margin: 2px 0 0 4px;
    }

    .scroll-y button,
    .scroll-x button,
    .thumb {
        flex: none;
        border: 1px solid #ababab;
        background: #fff;
    }

    .scroll-y button,
    .scroll-x button {
        width: 15px;
        height: 15px;
    }

    .thumb {
        flex: 85;
    }

    .track {
        flex: 15;
        background: #dadada;
    }

    /* sheet tabs */
    .sheet-tabs {
        display: flex;
        flex: none;
        height: 27px;
    }

    .sheet-nav {
        display: grid;
        grid-template-columns: 28px 28px;
        width: 100px;
        padding-left: 15px;
    }

    .sheet-nav svg {
        fill: #bbb;
    }

    .sheet-tab {
        width: 89px;
        height: 25px;
        margin-top: -1px;
        border-right: 1px solid #999;
        border-bottom: 2px solid #217346;
        border-left: 1px solid #999;
        background: #fff;
        color: #217346;
        font-size: 13px;
        font-weight: 500;
    }

    .add {
        margin-left: 32px;
    }

    .add svg {
        stroke: #777;
    }

    .sheet-tabs .dots {
        margin: 8px 15px 0 auto;
    }

    .scroll-x {
        width: 509px;
        height: 15px;
        margin: 6px 21px 0 0;
    }

    .scroll-x .thumb {
        flex: 29;
    }

    .scroll-x .track {
        flex: 3;
    }

    /* status bar */
    .status {
        display: flex;
        flex: none;
        align-items: center;
        height: 22px;
        padding: 0 8px;
        border-top: 1px solid #c6c6c6;
        background: #f3f2f1;
    }

    .macro {
        margin-left: 19px;
    }

    .views {
        display: grid;
        grid-template-columns: repeat(3, 40px);
        height: 100%;
        margin-left: auto;
    }

    .step {
        width: 20px;
    }

    input[type='range'] {
        width: 98px;
        height: 12px;
        margin: 0;
        background: linear-gradient(#ababab, #ababab) center / 100% 1px no-repeat;
    }

    input[type='range']::-webkit-slider-thumb {
        width: 5px;
        height: 12px;
        background: #777;
        appearance: none;
    }

    output {
        width: 40px;
        text-align: right;
    }
</style>
